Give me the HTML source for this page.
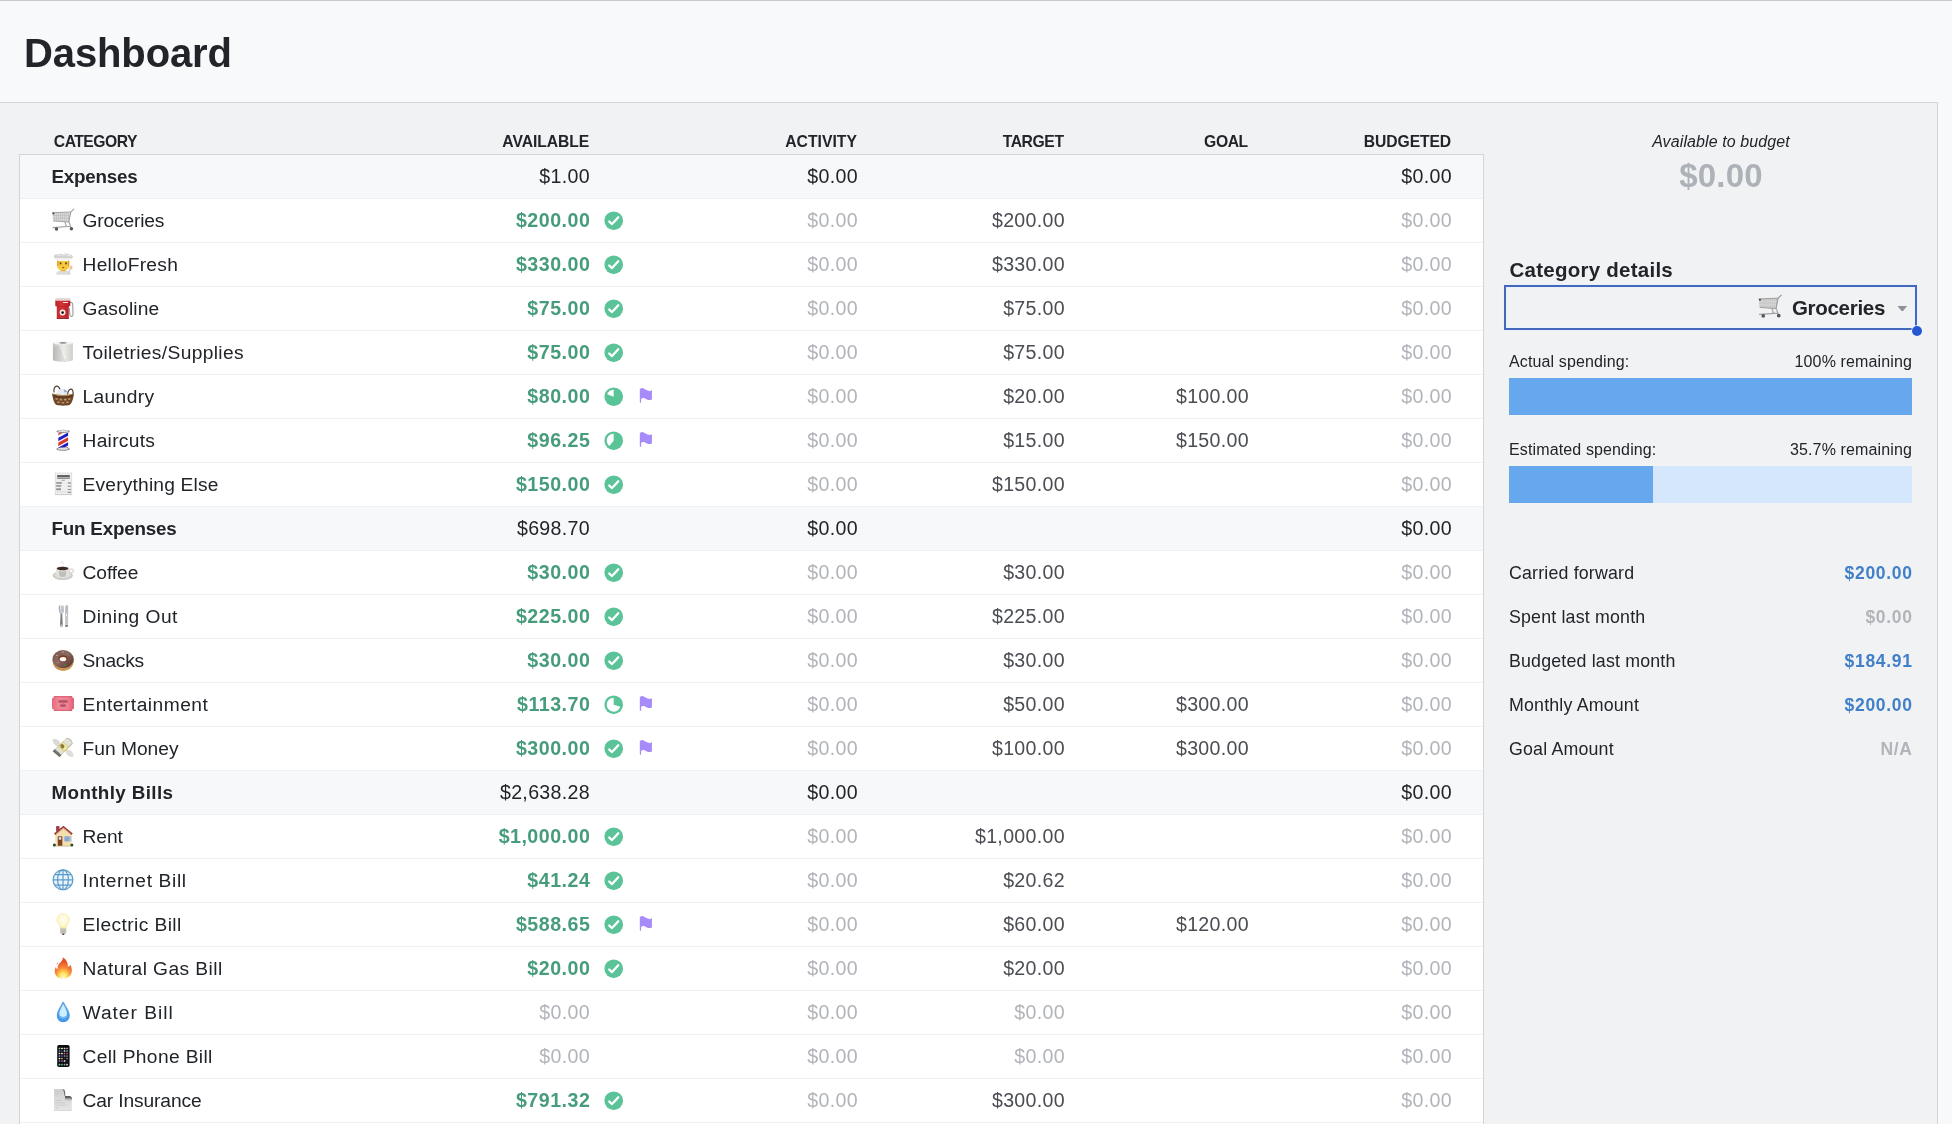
<!DOCTYPE html>
<html lang="en"><head><meta charset="utf-8"><title>Dashboard</title>
<style>
*{box-sizing:border-box}
html,body{margin:0;padding:0}
body{width:1952px;height:1124px;overflow:hidden;position:relative;background:#f8f9fb;font-family:"Liberation Sans",sans-serif;color:#212529;font-size:19px}
.topline{position:absolute;left:0;top:0;width:1952px;height:1px;background:#c6c8cc}
.hdr{position:absolute;left:0;top:1px;width:1952px;height:101px;background:#f8f9fb}
.ov h1{position:absolute;left:24px;top:23px;margin:0;font-size:40px;line-height:60px;font-weight:bold;color:#212529;letter-spacing:-.12px;white-space:nowrap}
.panel{position:absolute;left:-2px;top:102px;width:1940px;height:1030px;background:#f1f2f4;border:1px solid #d2d4d8}
.ch{position:absolute;top:131px;letter-spacing:-.3px;font-size:15.7px;line-height:22px;font-weight:bold;color:#212529;white-space:nowrap}
.ch.r{text-align:right}
.tbl{position:absolute;left:20px;top:51px;width:1465px;height:980px;border:1px solid #d3d5d9;background:#fff;overflow:hidden}
.rb{position:absolute;left:0;width:1463px;height:44px;border-bottom:1px solid #f0f1f2;background:#fff}
.rb.grp{background:#f7f8fa}
.ov{position:absolute;left:0;top:0;width:1952px;height:1124px;overflow:hidden;will-change:transform}
.rows{position:absolute;left:20px;top:155px;width:1463px;height:980px}
.row{position:absolute;left:0;width:1463px;height:44px;line-height:43px;white-space:nowrap}
.row span{position:absolute;top:0}
.nm{font-size:19.2px}
.nm.b{font-weight:bold;font-size:18.8px}
.n{text-align:right;font-size:19.6px;letter-spacing:.32px}
.c1{right:893px}
.c2{right:625px}
.c3{right:418px}
.c4{right:234px}
.c5{right:31px}
.gr{color:#479c7c;font-weight:bold;letter-spacing:.5px;margin-right:-.3px}
.z{color:#b1b4b9}
.t{color:#4a4d52}
.em{left:31px;top:9px !important;width:24px;height:24px;line-height:0}
.em svg{width:24px;height:24px;display:block}
.st{left:583.9px;top:11.7px !important;width:19.4px;height:19.4px;line-height:0}
.st svg{width:19.4px;height:19.4px;display:block}
.fl{left:619px;top:13px !important;width:14px;height:16px;line-height:0}
.fl svg{width:14px;height:16px;display:block}
.side{position:absolute;left:0;top:0;width:1952px;height:0}
.side>div{position:absolute;white-space:nowrap}
.atb{left:1521px;width:400px;text-align:center;top:131px;font-size:16px;line-height:22px;font-style:italic;letter-spacing:.1px}
.atbv{left:1521px;width:400px;text-align:center;top:154px;font-size:33px;line-height:44px;font-weight:bold;color:#adb1b8;letter-spacing:.2px}
.cdt{left:1509.5px;top:256px;font-size:20.5px;line-height:28px;font-weight:bold;letter-spacing:.25px}
.sel{left:1504px;top:285px;width:413px;height:45px;border:2px solid #4668ba;box-shadow:0 0 0 1px rgba(232,241,253,.85),inset 0 0 0 1px rgba(232,241,253,.85)}
.seltx{position:absolute;right:30px;top:7px;font-size:20.5px;line-height:28px;font-weight:bold;letter-spacing:-.3px}
.selic{position:absolute;right:132px;top:7px;width:26px;height:25px}
.selic svg{width:26px;height:25px;display:block}
.caret{position:absolute;right:7.2px;top:18.7px;width:10.6px;height:5.8px}
.dot{left:1912px;top:325.5px;width:10px;height:10px;border-radius:50%;background:#2556d4;box-shadow:0 0 0 1px rgba(240,246,255,.8)}
.lb{font-size:16px;line-height:22px;letter-spacing:.13px}
.lb.rr{right:40px;text-align:right}
.bar{left:1509px;width:403px;height:37px;background:#d4e7fc}
.bar div{height:37px;background:#66a7ed}
.dl{left:1509px;font-size:17.8px;line-height:44px;letter-spacing:.18px}
.dv{right:40px;text-align:right;font-size:17.5px;line-height:44px;font-weight:bold;letter-spacing:.7px;margin-right:-.7px}
.bl{color:#4180c8}
.gy{color:#b1b4b9}

</style></head>
<body>
<svg width="0" height="0" style="position:absolute"><defs>
<linearGradient id="gRoll" x1="0" x2="1" y1="0" y2="0"><stop offset="0" stop-color="#c2c2be"/><stop offset=".55" stop-color="#ecece9"/><stop offset="1" stop-color="#cfcfcb"/></linearGradient>
<radialGradient id="gFire" cx=".5" cy=".95" r=".75"><stop offset="0" stop-color="#fffbe0"/><stop offset=".3" stop-color="#ffe25a"/><stop offset=".62" stop-color="#f98a3a"/><stop offset="1" stop-color="#e85228"/></radialGradient>
<linearGradient id="gDrop" x1="0" x2="0" y1="0" y2="1"><stop offset="0" stop-color="#6aa6da"/><stop offset=".55" stop-color="#55a0e6"/><stop offset="1" stop-color="#3f96ea"/></linearGradient>
<radialGradient id="gBulb" cx=".5" cy=".4" r=".6"><stop offset="0" stop-color="#fffdf2"/><stop offset=".7" stop-color="#fdf6cf"/><stop offset="1" stop-color="#f6e89a"/></radialGradient>
<linearGradient id="gPage" x1="0" x2="0" y1="0" y2="1"><stop offset="0" stop-color="#cfcfcf"/><stop offset="1" stop-color="#e6e6e6"/></linearGradient>
<linearGradient id="gDonut" x1="0" x2="1" y1="0" y2="1"><stop offset="0" stop-color="#7a5648"/><stop offset=".45" stop-color="#8a6a62"/><stop offset="1" stop-color="#4e2c20"/></linearGradient>
<linearGradient id="gFuel" x1="0" x2="1" y1="0" y2="0"><stop offset="0" stop-color="#b92428"/><stop offset=".4" stop-color="#d4353a"/><stop offset="1" stop-color="#b01f24"/></linearGradient>
<linearGradient id="gTicket" x1="0" x2="1" y1="0" y2="0"><stop offset="0" stop-color="#e36a7c"/><stop offset=".3" stop-color="#f08796"/><stop offset=".7" stop-color="#ef8292"/><stop offset="1" stop-color="#de6074"/></linearGradient>
</defs></svg>
<div class="topline"></div>
<div class="hdr"></div>
<div class="panel">
<div class="tbl">
<div class="rb grp" style="top:0px"></div>
<div class="rb" style="top:44px"></div>
<div class="rb" style="top:88px"></div>
<div class="rb" style="top:132px"></div>
<div class="rb" style="top:176px"></div>
<div class="rb" style="top:220px"></div>
<div class="rb" style="top:264px"></div>
<div class="rb" style="top:308px"></div>
<div class="rb grp" style="top:352px"></div>
<div class="rb" style="top:396px"></div>
<div class="rb" style="top:440px"></div>
<div class="rb" style="top:484px"></div>
<div class="rb" style="top:528px"></div>
<div class="rb" style="top:572px"></div>
<div class="rb grp" style="top:616px"></div>
<div class="rb" style="top:660px"></div>
<div class="rb" style="top:704px"></div>
<div class="rb" style="top:748px"></div>
<div class="rb" style="top:792px"></div>
<div class="rb" style="top:836px"></div>
<div class="rb" style="top:880px"></div>
<div class="rb" style="top:924px"></div>
</div>
</div>
<div class="ov">
<h1>Dashboard</h1>
<div class="ch" style="left:53.8px;letter-spacing:-.5px">CATEGORY</div>
<div class="ch r" style="right:1363.0px;letter-spacing:-0.08px;margin-right:-0.08px">AVAILABLE</div>
<div class="ch r" style="right:1095.0px;letter-spacing:0.04px;margin-right:0.04px">ACTIVITY</div>
<div class="ch r" style="right:888.8px;letter-spacing:-0.40px;margin-right:-0.40px">TARGET</div>
<div class="ch r" style="right:704.6px;letter-spacing:-0.40px;margin-right:-0.40px">GOAL</div>
<div class="ch r" style="right:501.0px;letter-spacing:-0.10px;margin-right:-0.10px">BUDGETED</div>
<div class="rows">
<div class="row" style="top:0px"><span class="nm b" style="left:31.5px;letter-spacing:-0.20px">Expenses</span><span class="n c1">$1.00</span><span class="n c2">$0.00</span><span class="n c5">$0.00</span></div>
<div class="row" style="top:44px"><span class="em"><svg viewBox="0 0 24 24"><path d="M1.2 4.7L19.7 4 17.8 14 2.100 12.900z" fill="#e6e6e6"/><path d="M3.200 5v7.800M5.200 5v8M7.200 4.900v8.200M9.200 4.800v8.400M11.200 4.700v8.600M13.200 4.600v8.800M15.200 4.500v9M17.200 4.400v9" stroke="#9c9c9c" stroke-width=".55" fill="none"/><path d="M1.500 7.600l17.500-.5M1.800 10.300l17-.2" stroke="#b4b4b4" stroke-width=".5" fill="none"/><path d="M1.200 4.700L19.700 4M2.100 12.900L17.800 14" stroke="#9a9a9a" stroke-width=".9" fill="none"/><circle cx="2.400" cy="5.500" r="1" fill="#444"/><path d="M17.800 14L19.700 4.200 22.700 1.200" stroke="#9c9c9c" stroke-width="1.100" fill="none" stroke-linecap="round"/><path d="M14 14l1.300 4.300M18 14l1.700 4.700M1.900 19.600L19.700 18.300" stroke="#a2a2a2" stroke-width="1.100" fill="none" stroke-linecap="round"/><circle cx="5.500" cy="21" r="1.750" fill="#555"/><circle cx="20.400" cy="20.800" r="1.750" fill="#555"/></svg></span><span class="nm" style="left:62.5px;letter-spacing:-0.16px">Groceries</span><span class="n c1 gr">$200.00</span><span class="st"><svg viewBox="0 0 20 20"><circle cx="10" cy="10" r="9.6" fill="#5bc398"/><path d="M5.400 10.900L8.300 13.500 14.700 6.500" fill="none" stroke="#fff" stroke-width="2.35" stroke-linecap="round" stroke-linejoin="round"/></svg></span><span class="n c2 z">$0.00</span><span class="n c3 t">$200.00</span><span class="n c5 z">$0.00</span></div>
<div class="row" style="top:88px"><span class="em"><svg viewBox="0 0 24 24"><path d="M5.100 22.800c0-3 2.500-4.600 7-4.600s7.600 1.600 7.600 4.600z" fill="#dcdcdc"/><rect x="9.800" y="16.800" width="4.800" height="2.400" fill="#e2a62a"/><path d="M6.200 9h12v5.200c0 2.600-2.600 4.200-6 4.200s-6-1.600-6-4.200z" fill="#f7c93e"/><path d="M6.200 8.500h1.300v5.500h-1.300zM16.900 8.500h1.300v5.500h-1.300z" fill="#dc9c24"/><ellipse cx="9.600" cy="11.400" rx=".9" ry="1.100" fill="#5a3a10"/><ellipse cx="15" cy="11.400" rx=".9" ry="1.100" fill="#5a3a10"/><ellipse cx="12.200" cy="15.500" rx="1.200" ry=".7" fill="#9a5a14"/><path d="M3 5c-.4-2 1.600-3.300 3.600-2.700C7.600 1.600 10 1.300 12 2.300c1.800-1 4.400-.9 5.600.2 2.300-.5 4.500.700 4.300 2.500-.1 1.200-1.400 1.800-3 1.600H5.800C4.300 6.800 3.200 6.200 3 5z" fill="#d2d2d2"/><path d="M6 3.600c1-.8 2.400-.9 3.400-.3M11 3c1.100-.6 2.500-.5 3.500.1M16.500 3.600c.9-.5 2.200-.4 3 .3" stroke="#f4f4f4" stroke-width=".9" fill="none" stroke-linecap="round"/><rect x="5.500" y="6.200" width="13.400" height="2.400" rx=".6" fill="#f1f1f1"/><path d="M17 21.600l2.600-5" stroke="#cfcfcf" stroke-width="1.200" stroke-linecap="round"/><ellipse cx="20" cy="15.400" rx="1.500" ry="2" fill="#ecc29c"/></svg></span><span class="nm" style="left:62.5px;letter-spacing:0.29px">HelloFresh</span><span class="n c1 gr">$330.00</span><span class="st"><svg viewBox="0 0 20 20"><circle cx="10" cy="10" r="9.6" fill="#5bc398"/><path d="M5.400 10.900L8.300 13.500 14.700 6.500" fill="none" stroke="#fff" stroke-width="2.35" stroke-linecap="round" stroke-linejoin="round"/></svg></span><span class="n c2 z">$0.00</span><span class="n c3 t">$330.00</span><span class="n c5 z">$0.00</span></div>
<div class="row" style="top:132px"><span class="em"><svg viewBox="0 0 24 24"><path d="M19.300 6.200l1.400.5c.7.300 1 .8 1 1.600l.3 10.200c0 1.200-.6 1.900-1.600 1.900s-1.600-.7-1.600-1.900l-.5-6.300" stroke="#9a9a9a" stroke-width="1.100" fill="none" stroke-linecap="round"/><path d="M4.300 4.300h15v6h-1.500V22.800H5.800V10.300H4.300z" fill="url(#gFuel)"/><path d="M4.300 3c0-.7.500-1.100 1.100-1.100h12.800c.6 0 1.100.4 1.100 1.100v1.500H4.300z" fill="#dedede"/><rect x="4.300" y="3.600" width="15" height=".7" fill="#f0c0c0"/><rect x="12" y="6" width="5" height="1" fill="#f6e0e0"/><rect x="5.800" y="10" width="12" height=".6" fill="#a82024" opacity=".6"/><rect x="5.800" y="22" width="12" height=".8" fill="#8e1c20"/><circle cx="11.600" cy="16.500" r="2.900" fill="#fbeeee"/><circle cx="11.600" cy="16.600" r="1.350" fill="#111"/></svg></span><span class="nm" style="left:62.5px;letter-spacing:0.13px">Gasoline</span><span class="n c1 gr">$75.00</span><span class="st"><svg viewBox="0 0 20 20"><circle cx="10" cy="10" r="9.6" fill="#5bc398"/><path d="M5.400 10.900L8.300 13.500 14.700 6.500" fill="none" stroke="#fff" stroke-width="2.35" stroke-linecap="round" stroke-linejoin="round"/></svg></span><span class="n c2 z">$0.00</span><span class="n c3 t">$75.00</span><span class="n c5 z">$0.00</span></div>
<div class="row" style="top:176px"><span class="em"><svg viewBox="0 0 24 24"><path d="M1.900 3v17.200c3 1.200 6.500 1.500 10 1.500s7-.3 10-1.500V3z" fill="url(#gRoll)"/><ellipse cx="11.900" cy="3" rx="10" ry="1.600" fill="#f3f3f1"/><ellipse cx="12" cy="2.800" rx="3.700" ry=".9" fill="#8e8e8a"/><path d="M9 5.400c1.800 3.500 3.200 7.600 5.600 13l-1 .4C11.800 13.500 10.600 9 8.400 5.800z" fill="#fbfbfa"/><path d="M8.400 5.800c2.200 3.200 3.400 7.700 5.200 13l-.6 2.800c-3.800 0-8-.4-11.100-1.500V8c2-1.800 4.200-2.600 6.500-2.200z" fill="#000" opacity=".05"/><path d="M12.800 20.800h2.400v.5c0 .5-.5.800-1.200.8s-1.200-.3-1.200-.8z" fill="#d6d6d2"/></svg></span><span class="nm" style="left:62.5px;letter-spacing:0.36px">Toiletries/Supplies</span><span class="n c1 gr">$75.00</span><span class="st"><svg viewBox="0 0 20 20"><circle cx="10" cy="10" r="9.6" fill="#5bc398"/><path d="M5.400 10.900L8.300 13.500 14.700 6.500" fill="none" stroke="#fff" stroke-width="2.35" stroke-linecap="round" stroke-linejoin="round"/></svg></span><span class="n c2 z">$0.00</span><span class="n c3 t">$75.00</span><span class="n c5 z">$0.00</span></div>
<div class="row" style="top:220px"><span class="em"><svg viewBox="0 0 24 24"><path d="M3 8c-.5-3.200.6-5.700 2.500-5.900 1.700-.1 3 1.500 3.900 4.200" stroke="#4a3c32" stroke-width="1.100" fill="none" stroke-linecap="round"/><path d="M5.100 9.500C6 6.200 8.500 5 11 5.100c2.600.1 5.200.6 6 3.400l.4 3.800H5z" fill="#e9edf3"/><path d="M12.500 5.600c1.800.2 3.200.9 3.800 2.300l-2.800.6z" fill="#9dabc2"/><path d="M1.400 9.400c3 1.500 7 1.900 10.600 1.900s7.700-.4 10.700-1.900c0 5-1.800 9.500-3.800 11.400-2 .7-4.400.9-6.900.9s-5-.2-6.900-.9C3.100 18.900 1.400 14.400 1.400 9.400z" fill="#6e4828"/><path d="M1.400 9.200c3 1.300 7 1.700 10.600 1.700s7.700-.4 10.700-1.700l-.1 1.300c-3 1.400-7 1.800-10.600 1.800s-7.500-.4-10.500-1.800z" fill="#b08454"/><path d="M1.500 10.600c3 1.400 6.900 1.800 10.500 1.800s7.600-.4 10.600-1.800l-.2 1.500c-3 1.300-6.800 1.700-10.400 1.700s-7.300-.4-10.300-1.700z" fill="#4a2e16" opacity=".75"/><path d="M4.500 14.300h2.300v1.500H4.500zM8.600 14.800h2.600v1.600H8.600zM13 14.800h2.600v1.600H13zM17.200 14.200h2.200v1.500h-2.200zM6.200 17.600h2.500v1.500H6.200zM10.600 18h2.700v1.500h-2.700zM15.200 17.600h2.400v1.500h-2.400z" fill="#cfa571" opacity=".85"/><path d="M16.700 9.900c.4-2.800 1.600-4.600 3.200-4.800 1.500-.1 2.200 1.700 2.200 4.500" stroke="#4a3c32" stroke-width="1.100" fill="none" stroke-linecap="round"/></svg></span><span class="nm" style="left:62.5px;letter-spacing:0.37px">Laundry</span><span class="n c1 gr">$80.00</span><span class="st"><svg viewBox="0 0 20 20"><circle cx="10" cy="10" r="9.6" fill="#5bc398"/><path d="M10 10L3.27 7.58A7.15 7.15 0 0 1 10 2.85Z" fill="#fff"/></svg></span><span class="fl"><svg viewBox="0 0 14 16"><path d="M.82 .9C2 .2 3 0 4 .17c1.500.33 2.700 1.530 3.940 2.130 1.260.6 2.560.9 3.560.7.600-.2 1.100-.6 1.420-1.200v9.400c-.620.6-1.320.85-2.120.85-1 0-1.900-.15-2.860-.5-1.040-.45-1.940-1.250-2.840-1.450-1.100-.2-2.100.2-3 .74v3.360a.64.64 0 0 1-1.280 0z" fill="#a78bfa"/></svg></span><span class="n c2 z">$0.00</span><span class="n c3 t">$20.00</span><span class="n c4 t">$100.00</span><span class="n c5 z">$0.00</span></div>
<div class="row" style="top:264px"><span class="em"><svg viewBox="0 0 24 24"><clipPath id="cpB"><rect x="7.300" y="4" width="9.800" height="16"/></clipPath><rect x="7.300" y="4" width="9.800" height="16" fill="#fbf6f8"/><g clip-path="url(#cpB)"><path d="M6 10.600L18 4v3.300L6 13.900z" fill="#1c1cc4"/><path d="M6 15.300L18 8.700v3.500L6 18.800z" fill="#d83a2a"/><path d="M6 20.300L18 13.700v3.400L6 23.700z" fill="#1c1cc4"/><path d="M6 6L14 1.600v2L6 8z" fill="#c05a4e"/><path d="M10 24l8-4.400v-1.300L10 22.800z" fill="#c05a4e"/></g><ellipse cx="12.100" cy="3.400" rx="6.800" ry="1.600" fill="#8e8e8e"/><ellipse cx="12.100" cy="3.100" rx="5.300" ry=".9" fill="#ebebeb"/><ellipse cx="12.100" cy="21" rx="6.800" ry="1.850" fill="#8e8e8e"/><ellipse cx="12.100" cy="20.700" rx="5.300" ry="1" fill="#e2e2e2"/></svg></span><span class="nm" style="left:62.5px;letter-spacing:0.29px">Haircuts</span><span class="n c1 gr">$96.25</span><span class="st"><svg viewBox="0 0 20 20"><circle cx="10" cy="10" r="9.6" fill="#5bc398"/><path d="M10 10L5.44 15.51A7.15 7.15 0 0 1 10 2.85Z" fill="#fff"/></svg></span><span class="fl"><svg viewBox="0 0 14 16"><path d="M.82 .9C2 .2 3 0 4 .17c1.500.33 2.700 1.530 3.940 2.130 1.260.6 2.560.9 3.560.7.600-.2 1.100-.6 1.420-1.200v9.400c-.620.6-1.320.85-2.120.85-1 0-1.900-.15-2.860-.5-1.040-.45-1.940-1.250-2.840-1.450-1.100-.2-2.100.2-3 .74v3.360a.64.64 0 0 1-1.280 0z" fill="#a78bfa"/></svg></span><span class="n c2 z">$0.00</span><span class="n c3 t">$15.00</span><span class="n c4 t">$150.00</span><span class="n c5 z">$0.00</span></div>
<div class="row" style="top:308px"><span class="em"><svg viewBox="0 0 24 24"><rect x="4.200" y="1" width="16.600" height="21.800" fill="#efefef" stroke="#d2d2d2" stroke-width=".6"/><rect x="6.200" y="3.100" width="12.600" height="2.300" fill="#5a5a5a"/><rect x="6" y="6" width="13" height=".8" fill="#7a7a7a"/><rect x="10.500" y="7.800" width="3.400" height=".9" fill="#9a9a9a"/><rect x="5.200" y="10.200" width="5.600" height="1.500" fill="#8a8a8a"/><rect x="16.800" y="10.300" width="3.200" height="1.400" fill="#9a9a9a"/><rect x="5.200" y="13.200" width="5" height="1.500" fill="#8a8a8a"/><rect x="16.800" y="13.700" width="3.200" height="1.200" fill="#9a9a9a"/><rect x="5.200" y="16.400" width="4.800" height="1.700" fill="#8a8a8a"/><rect x="16.800" y="16.900" width="3.200" height="1.200" fill="#9a9a9a"/><rect x="5.200" y="19.600" width="9.500" height=".5" fill="#c8c8c8"/><rect x="16.600" y="19.800" width="3.400" height="1.100" fill="#8a8a8a"/><rect x="4.200" y="22" width="16.600" height=".8" fill="#c9c9c9"/></svg></span><span class="nm" style="left:62.5px;letter-spacing:0.19px">Everything Else</span><span class="n c1 gr">$150.00</span><span class="st"><svg viewBox="0 0 20 20"><circle cx="10" cy="10" r="9.6" fill="#5bc398"/><path d="M5.400 10.900L8.300 13.500 14.700 6.500" fill="none" stroke="#fff" stroke-width="2.35" stroke-linecap="round" stroke-linejoin="round"/></svg></span><span class="n c2 z">$0.00</span><span class="n c3 t">$150.00</span><span class="n c5 z">$0.00</span></div>
<div class="row" style="top:352px"><span class="nm b" style="left:31.5px;letter-spacing:-0.20px">Fun Expenses</span><span class="n c1">$698.70</span><span class="n c2">$0.00</span><span class="n c5">$0.00</span></div>
<div class="row" style="top:396px"><span class="em"><svg viewBox="0 0 24 24"><path d="M9.800 2.800c.2-1 1.400-1.200 1.900-.4.400.7 0 1.200.9 1.700" stroke="#d0d0d0" stroke-width=".9" fill="none" stroke-linecap="round"/><ellipse cx="11.800" cy="15.500" rx="10.100" ry="4.500" fill="#c9c8c4"/><ellipse cx="11.800" cy="15" rx="8.600" ry="3.500" fill="#dddcd8"/><circle cx="20.300" cy="10.800" r="2" fill="none" stroke="#dcdad6" stroke-width="1.300"/><path d="M4.900 8.400c0 4.200.9 7.200 2.900 8.400 2.200 1 5.400 1 7.500 0 2-1.200 2.900-4.200 2.900-8.400z" fill="#e6e4e0"/><path d="M7.500 11c1.300.6 6.500.7 8 0l-.7 5.200c-1.700.9-4.700.9-6.400 0z" fill="#a9a7a3" opacity=".6"/><ellipse cx="11.600" cy="8.400" rx="6.700" ry="2.300" fill="#efe9e6"/><ellipse cx="11.600" cy="8.500" rx="5.800" ry="1.800" fill="#3b2a24"/></svg></span><span class="nm" style="left:62.5px;letter-spacing:-0.06px">Coffee</span><span class="n c1 gr">$30.00</span><span class="st"><svg viewBox="0 0 20 20"><circle cx="10" cy="10" r="9.6" fill="#5bc398"/><path d="M5.400 10.900L8.300 13.500 14.700 6.500" fill="none" stroke="#fff" stroke-width="2.35" stroke-linecap="round" stroke-linejoin="round"/></svg></span><span class="n c2 z">$0.00</span><span class="n c3 t">$30.00</span><span class="n c5 z">$0.00</span></div>
<div class="row" style="top:440px"><span class="em"><svg viewBox="0 0 24 24"><path d="M8.100 1.400h.9v4.500h.7V1.400h.9v4.500h.700V1.400h.9v4.500h.4V1.400h.100c.5 2.300.5 5.300-.3 7.200-.400.800-1.100 1.100-2 1.100s-1.700-.3-2.100-1.100c-.700-2-.700-4.900-.2-7.200z" fill="#a3a8b2"/><path d="M8.300 6.300h4.200c0 1.600-.3 2.400-.8 3-.4.300-1.600.3-2.300 0-.700-.600-1.100-1.400-1.100-3z" fill="#c9cdd8"/><path d="M9.600 9.400h1.600l.6 12.200c0 .8-.5 1.200-1.400 1.200s-1.400-.4-1.400-1.200z" fill="#7d7d80"/><rect x="9.600" y="20.600" width="1.700" height="1.300" fill="#d8d8dc"/><path d="M14.200 12V3.500c0-1.500.7-2.500 1.700-2.500.9 0 1.200 1 1.200 2.500V12z" fill="#b9bbc0"/><path d="M14.100 12h3v9.600c0 .8-.6 1.300-1.500 1.300s-1.500-.5-1.500-1.300z" fill="#c5c6ca"/><rect x="14.100" y="21" width="3" height="1.900" rx=".8" fill="#85868a"/><rect x="15" y="9.800" width="1" height="2.300" fill="#f4f4f6"/></svg></span><span class="nm" style="left:62.5px;letter-spacing:0.47px">Dining Out</span><span class="n c1 gr">$225.00</span><span class="st"><svg viewBox="0 0 20 20"><circle cx="10" cy="10" r="9.6" fill="#5bc398"/><path d="M5.400 10.900L8.300 13.500 14.700 6.500" fill="none" stroke="#fff" stroke-width="2.35" stroke-linecap="round" stroke-linejoin="round"/></svg></span><span class="n c2 z">$0.00</span><span class="n c3 t">$225.00</span><span class="n c5 z">$0.00</span></div>
<div class="row" style="top:484px"><span class="em"><svg viewBox="0 0 24 24"><ellipse cx="12.100" cy="13.300" rx="10.600" ry="9.400" fill="#d3a462"/><ellipse cx="12.100" cy="11.300" rx="10.700" ry="9.400" fill="url(#gDonut)"/><path d="M2 14c2 4.500 6 6 10 6s8.200-1.600 10.400-6c-.8 5.500-5 8.700-10.300 8.700S2.600 19.500 2 14z" fill="#c99554"/><ellipse cx="12" cy="10.600" rx="4.700" ry="3.400" fill="#7a3c22"/><ellipse cx="12" cy="11.200" rx="3.300" ry="2.100" fill="#fdfbf7"/><circle cx="14" cy="17.200" r=".9" fill="#5a7a3a"/><circle cx="6" cy="7.500" r=".6" fill="#e8e0d8"/><circle cx="17.500" cy="6" r=".6" fill="#7a8a5a"/><circle cx="12" cy="4" r=".7" fill="#d8c8b8"/><circle cx="7" cy="14.500" r=".7" fill="#b89ab0"/></svg></span><span class="nm" style="left:62.5px;letter-spacing:-0.26px">Snacks</span><span class="n c1 gr">$30.00</span><span class="st"><svg viewBox="0 0 20 20"><circle cx="10" cy="10" r="9.6" fill="#5bc398"/><path d="M5.400 10.900L8.300 13.500 14.700 6.500" fill="none" stroke="#fff" stroke-width="2.35" stroke-linecap="round" stroke-linejoin="round"/></svg></span><span class="n c2 z">$0.00</span><span class="n c3 t">$30.00</span><span class="n c5 z">$0.00</span></div>
<div class="row" style="top:528px"><span class="em"><svg viewBox="0 0 24 24"><path d="M3 4h18l.4 1.600 1.600.6v10.500l-1.600.6-.4 1.600H3l-.4-1.600L1 16.700V6.200l1.600-.6z" fill="url(#gTicket)"/><path d="M3 4h18l.3 1.200H2.700zM3 18.900h18l.3-1.200H2.700z" fill="#d65a70" opacity=".7"/><rect x="7.600" y="8.300" width="9" height="2.300" fill="#b04e62"/><rect x="9.200" y="12.400" width="5.500" height="2.300" fill="#b04e62"/><rect x="10.800" y="11.200" width="2.300" height=".5" fill="#c05a70"/></svg></span><span class="nm" style="left:62.5px;letter-spacing:0.49px">Entertainment</span><span class="n c1 gr">$113.70</span><span class="st"><svg viewBox="0 0 20 20"><circle cx="10" cy="10" r="9.6" fill="#5bc398"/><path d="M10 10L16.80 12.21A7.15 7.15 0 1 1 10 2.85Z" fill="#fff"/></svg></span><span class="fl"><svg viewBox="0 0 14 16"><path d="M.82 .9C2 .2 3 0 4 .17c1.500.33 2.700 1.530 3.940 2.130 1.260.6 2.560.9 3.560.7.600-.2 1.100-.6 1.420-1.200v9.400c-.620.6-1.320.85-2.120.85-1 0-1.900-.15-2.860-.5-1.040-.45-1.940-1.250-2.840-1.450-1.100-.2-2.100.2-3 .74v3.360a.64.64 0 0 1-1.280 0z" fill="#a78bfa"/></svg></span><span class="n c2 z">$0.00</span><span class="n c3 t">$50.00</span><span class="n c4 t">$300.00</span><span class="n c5 z">$0.00</span></div>
<div class="row" style="top:572px"><span class="em"><svg viewBox="0 0 24 24"><path d="M1.600 3.300c2-.6 4.800-.2 6.400 1.700 1.200 1.500 1.800 3.300 1.500 5-1.700.7-4 .300-5.600-1.300C2.400 7.200 1.700 5.200 1.600 3.300z" fill="#d9d9d5"/><path d="M22.600 20.400c-2 .7-4.600.3-6.300-1.500-1.300-1.400-1.900-3.300-1.600-5 1.700-.800 4-.400 5.600 1.200 1.500 1.500 2.200 3.400 2.300 5.300z" fill="#deded9"/><path d="M1.700 15.200L15.400 1.900c2.500-.5 5.300 1.600 6.500 5.800L8.500 21z" fill="#b9bcb0"/><path d="M1.700 15.200l2-1.900 6.900 5.700L8.500 21z" fill="#6f716c"/><path d="M14.500 2.800c2.400-.6 5 1 6.300 4.400l-3.400 3.300c-2.200-1.400-4.200-3.300-5.300-5.400z" fill="#e4e2da"/><path d="M4.500 13.200l2.900-2.800c2 1.700 4 3.500 5.700 5.500l-2.900 2.900c-1.700-2-3.700-3.900-5.700-5.600z" fill="#e2e0d8"/><path d="M7.200 10.600l5-4.900c1.700 2.200 3.600 4 5.800 5.500l-5 4.900c-1.800-2.100-3.700-3.900-5.800-5.500z" fill="#e6d768"/><path d="M8.900 10.300l3.400-3.200c1.200 1.400 2.500 2.700 4 3.800l-3.400 3.300c-1.200-1.500-2.500-2.800-4-3.900z" fill="#f1ecc4"/><ellipse cx="11.400" cy="10.300" rx="1.900" ry="2.300" transform="rotate(-40 11.400 10.300)" fill="#8c7a3c"/></svg></span><span class="nm" style="left:62.5px;letter-spacing:-0.00px">Fun Money</span><span class="n c1 gr">$300.00</span><span class="st"><svg viewBox="0 0 20 20"><circle cx="10" cy="10" r="9.6" fill="#5bc398"/><path d="M5.400 10.900L8.300 13.500 14.700 6.500" fill="none" stroke="#fff" stroke-width="2.35" stroke-linecap="round" stroke-linejoin="round"/></svg></span><span class="fl"><svg viewBox="0 0 14 16"><path d="M.82 .9C2 .2 3 0 4 .17c1.500.33 2.700 1.530 3.940 2.130 1.260.6 2.560.9 3.560.7.600-.2 1.100-.6 1.420-1.200v9.400c-.620.6-1.320.85-2.120.85-1 0-1.900-.15-2.860-.5-1.040-.45-1.940-1.250-2.840-1.450-1.100-.2-2.100.2-3 .74v3.360a.64.64 0 0 1-1.280 0z" fill="#a78bfa"/></svg></span><span class="n c2 z">$0.00</span><span class="n c3 t">$100.00</span><span class="n c4 t">$300.00</span><span class="n c5 z">$0.00</span></div>
<div class="row" style="top:616px"><span class="nm b" style="left:31.5px;letter-spacing:0.38px">Monthly Bills</span><span class="n c1">$2,638.28</span><span class="n c2">$0.00</span><span class="n c5">$0.00</span></div>
<div class="row" style="top:660px"><span class="em"><svg viewBox="0 0 24 24"><rect x="5.100" y="2.100" width="3.400" height="5.500" fill="#a43a4a"/><path d="M4.300 10L12.400 3.600 20.400 10v12.300H4.300z" fill="#f1dfae"/><path d="M4.300 21.600h16.100v.8H4.300z" fill="#cdb9a0"/><path d="M12.400 1.700l9.400 7.700-1.500 1.700-7.900-6.500-7.900 6.500L3 9.400z" fill="#9a3832"/><path d="M12.400 4.600l7.100 5.800.5-.5-7.600-6.300-7.600 6.300.5.500z" fill="#f3d9b0" opacity=".8"/><rect x="6.800" y="12.400" width="4.500" height="9.300" fill="#7b3a20"/><circle cx="9" cy="14.500" r="1.450" fill="#d4dfee"/><rect x="7.400" y="17.200" width="3.300" height=".5" fill="#9a5a38"/><rect x="7.400" y="19.300" width="3.300" height=".5" fill="#9a5a38"/><rect x="13.300" y="12.200" width="7.100" height="5.300" fill="#b7bcc6"/><rect x="13.600" y="12.500" width="4.600" height="4.700" rx="1.200" fill="#86a8d8"/><circle cx="3.400" cy="20.900" r="1.500" fill="#2c4a1a"/><circle cx="20.900" cy="20.900" r="1.500" fill="#2c4a1a"/></svg></span><span class="nm" style="left:62.5px;letter-spacing:-0.07px">Rent</span><span class="n c1 gr">$1,000.00</span><span class="st"><svg viewBox="0 0 20 20"><circle cx="10" cy="10" r="9.6" fill="#5bc398"/><path d="M5.400 10.900L8.300 13.500 14.700 6.500" fill="none" stroke="#fff" stroke-width="2.35" stroke-linecap="round" stroke-linejoin="round"/></svg></span><span class="n c2 z">$0.00</span><span class="n c3 t">$1,000.00</span><span class="n c5 z">$0.00</span></div>
<div class="row" style="top:704px"><span class="em"><svg viewBox="0 0 24 24"><circle cx="12" cy="11.800" r="9.900" fill="#e6f4fc" stroke="#5d9bc8" stroke-width="1.200"/><path d="M12 1.900v19.800M2.100 11.800h19.800M3.800 6.600h16.400M3.800 17.200h16.400" stroke="#5d9bc8" stroke-width="1.200" fill="none"/><ellipse cx="12" cy="11.800" rx="5.400" ry="9.900" fill="none" stroke="#5d9bc8" stroke-width="1.200"/></svg></span><span class="nm" style="left:62.5px;letter-spacing:0.63px">Internet Bill</span><span class="n c1 gr">$41.24</span><span class="st"><svg viewBox="0 0 20 20"><circle cx="10" cy="10" r="9.6" fill="#5bc398"/><path d="M5.400 10.900L8.300 13.500 14.700 6.500" fill="none" stroke="#fff" stroke-width="2.35" stroke-linecap="round" stroke-linejoin="round"/></svg></span><span class="n c2 z">$0.00</span><span class="n c3 t">$20.62</span><span class="n c5 z">$0.00</span></div>
<div class="row" style="top:748px"><span class="em"><svg viewBox="0 0 24 24"><path d="M12.200 1.500c3.600 0 6.300 2.800 6.300 6.200 0 2.400-1.200 3.700-2.200 5.200-.8 1.200-1 2.300-1.100 3.500H9.200c-.1-1.200-.3-2.300-1.100-3.500-1-1.500-2.200-2.800-2.200-5.200 0-3.400 2.700-6.200 6.300-6.200z" fill="url(#gBulb)" stroke="#f3e5a0" stroke-width=".5"/><path d="M9.200 16.400h6v4c0 .7-.4 1.100-1 1.100h-4c-.6 0-1-.4-1-1.100z" fill="#b3afa7"/><path d="M9.200 17.600h6M9.200 19h6M9.200 20.400h6" stroke="#e2dfd8" stroke-width=".5"/><path d="M10.900 21.500h2.800l-.5 1.200c-.2.300-.4.400-.9.400s-.7-.1-.9-.4z" fill="#4a4846"/></svg></span><span class="nm" style="left:62.5px;letter-spacing:0.41px">Electric Bill</span><span class="n c1 gr">$588.65</span><span class="st"><svg viewBox="0 0 20 20"><circle cx="10" cy="10" r="9.6" fill="#5bc398"/><path d="M5.400 10.900L8.300 13.500 14.700 6.500" fill="none" stroke="#fff" stroke-width="2.35" stroke-linecap="round" stroke-linejoin="round"/></svg></span><span class="fl"><svg viewBox="0 0 14 16"><path d="M.82 .9C2 .2 3 0 4 .17c1.500.33 2.700 1.530 3.940 2.130 1.260.6 2.560.9 3.560.7.600-.2 1.100-.6 1.420-1.200v9.400c-.620.6-1.320.85-2.120.85-1 0-1.900-.15-2.860-.5-1.040-.45-1.940-1.250-2.840-1.450-1.100-.2-2.100.2-3 .74v3.360a.64.64 0 0 1-1.280 0z" fill="#a78bfa"/></svg></span><span class="n c2 z">$0.00</span><span class="n c3 t">$60.00</span><span class="n c4 t">$120.00</span><span class="n c5 z">$0.00</span></div>
<div class="row" style="top:792px"><span class="em"><svg viewBox="0 0 24 24"><path d="M5.600 8.200c.2-.8.700-1.400 1.400-1.700-.2 1-.6 1.500-1.300 2.300z" fill="#8a5a8a"/><path d="M11.800 1.200c1.800 1.200 4.400 3.700 4.800 6.300.2 1.300-.1 2.300.6 3.300 1-.2 1.800-1 2.200-2 1 2 1.600 4.200 1.400 6.500-.4 4.300-3.600 7.400-8.500 7.400-4.800 0-8.100-2.600-8.500-6.800-.2-2 .3-3.700 1.100-5 .3 1 .8 1.900 1.700 2.400C6.300 9.600 8 7.600 9.800 6c1.300-1.200 2.200-2.800 2-4.800z" fill="url(#gFire)"/></svg></span><span class="nm" style="left:62.5px;letter-spacing:0.43px">Natural Gas Bill</span><span class="n c1 gr">$20.00</span><span class="st"><svg viewBox="0 0 20 20"><circle cx="10" cy="10" r="9.6" fill="#5bc398"/><path d="M5.400 10.900L8.300 13.500 14.700 6.500" fill="none" stroke="#fff" stroke-width="2.35" stroke-linecap="round" stroke-linejoin="round"/></svg></span><span class="n c2 z">$0.00</span><span class="n c3 t">$20.00</span><span class="n c5 z">$0.00</span></div>
<div class="row" style="top:836px"><span class="em"><svg viewBox="0 0 24 24"><path d="M12.200 1.800c.5 0 .8.300 1.100.9 1.600 3.700 5.500 8.200 5.500 12.600 0 3.900-2.800 6.900-6.600 6.900S5.800 19.200 5.800 15.300c0-4.400 3.700-8.900 5.300-12.600.3-.6.600-.9 1.100-.9z" fill="url(#gDrop)"/><path d="M12.200 4.500c.3 0 .4.200.6.600 1 2.500 3.300 6 3.300 8.600 0 2.300-1.500 3.300-3.900 3.300s-3.900-1-3.900-3.300c0-2.600 2.300-6.100 3.300-8.600.2-.4.300-.6.600-.6z" fill="#c9eefc"/><path d="M8.300 14.500c.6 1.700 2 2.500 3.900 2.500s3.300-.8 3.900-2.500c.3 2.600-1.300 4.300-3.900 4.300s-4.200-1.700-3.900-4.300z" fill="#7cc2f4" opacity=".8"/></svg></span><span class="nm" style="left:62.5px;letter-spacing:0.98px">Water Bill</span><span class="n c1 z">$0.00</span><span class="n c2 z">$0.00</span><span class="n c3 z">$0.00</span><span class="n c5 z">$0.00</span></div>
<div class="row" style="top:880px"><span class="em"><svg viewBox="0 0 24 24"><rect x="6.200" y="1" width="12.400" height="22" rx="1.800" fill="#0c0c10"/><rect x="7.6" y="3.7" width="1.700" height="1.500" rx=".4" fill="#8fd07c"/><rect x="10.1" y="3.7" width="1.700" height="1.500" rx=".4" fill="#f2f2f2"/><rect x="12.7" y="3.7" width="1.700" height="1.500" rx=".4" fill="#d8d8e8"/><rect x="15.2" y="3.7" width="1.700" height="1.500" rx=".4" fill="#c8a0b0"/><rect x="7.6" y="6.3" width="1.700" height="1.500" rx=".4" fill="#6a86c8"/><rect x="10.1" y="6.3" width="1.700" height="1.500" rx=".4" fill="#3c3c58"/><rect x="12.7" y="6.3" width="1.700" height="1.500" rx=".4" fill="#e0e0e0"/><rect x="15.2" y="6.3" width="1.700" height="1.500" rx=".4" fill="#7ab0d0"/><rect x="7.6" y="8.8" width="1.700" height="1.500" rx=".4" fill="#e8e8c8"/><rect x="10.1" y="8.8" width="1.700" height="1.500" rx=".4" fill="#f0f0f0"/><rect x="12.7" y="8.8" width="1.700" height="1.500" rx=".4" fill="#c86a80"/><rect x="15.2" y="8.8" width="1.700" height="1.500" rx=".4" fill="#8a6a7a"/><rect x="7.6" y="11.3" width="1.700" height="1.500" rx=".4" fill="#7a96c8"/><rect x="10.1" y="11.3" width="1.700" height="1.500" rx=".4" fill="#6a4a9a"/><rect x="12.7" y="11.3" width="1.700" height="1.500" rx=".4" fill="#7aa0c8"/><rect x="15.2" y="11.3" width="1.700" height="1.500" rx=".4" fill="#c07080"/><rect x="7.6" y="13.8" width="1.700" height="1.500" rx=".4" fill="#f4f4f4"/><rect x="10.1" y="13.8" width="1.700" height="1.500" rx=".4" fill="#c8a060"/><rect x="12.7" y="13.8" width="1.700" height="1.500" rx=".4" fill="#303040"/><rect x="15.2" y="13.8" width="1.700" height="1.500" rx=".4" fill="#7a8a80"/><rect x="7.6" y="16.3" width="1.700" height="1.500" rx=".4" fill="#6a8ad0"/><rect x="10.1" y="16.3" width="1.700" height="1.500" rx=".4" fill="#b06070"/><rect x="12.7" y="16.3" width="1.700" height="1.500" rx=".4" fill="#f6f6f6"/><rect x="15.2" y="16.3" width="1.700" height="1.500" rx=".4" fill="#202028"/><rect x="7.600" y="19.800" width="1.700" height="1.700" rx=".4" fill="#7ad08a"/><rect x="10.100" y="19.800" width="1.700" height="1.700" rx=".4" fill="#58b090"/><rect x="12.700" y="19.800" width="1.700" height="1.700" rx=".4" fill="#68c080"/><rect x="15.200" y="19.800" width="1.700" height="1.700" rx=".4" fill="#f0c0e0"/></svg></span><span class="nm" style="left:62.5px;letter-spacing:0.36px">Cell Phone Bill</span><span class="n c1 z">$0.00</span><span class="n c2 z">$0.00</span><span class="n c3 z">$0.00</span><span class="n c5 z">$0.00</span></div>
<div class="row" style="top:924px"><span class="em"><svg viewBox="0 0 24 24"><path d="M3 1h9.300c1.200.2 1.800 1 1.800 2.300v5h4.600c1.300 0 2.100.8 2.100 2.200V22.800H3z" fill="url(#gPage)"/><path d="M11.300 1.200c1.900.2 2.900 1.300 2.900 3.100v3.800l-.9-.3c0-2.800-.4-5.400-2-6.600z" fill="#6e6e6e"/><path d="M14 8.100h4.500c1.400 0 2.300.9 2.300 2.400v1c-.6-.7-1.500-.9-2.700-.9h-4.100z" fill="#5e5e5e"/><path d="M14 10.500h4.200c1.200 0 2.100.3 2.600 1v.8H14z" fill="#a8a8a8" opacity=".7"/><path d="M4.200 3.600h6.200M4.200 6h6.800M4.200 12.500h6.500M4.200 14.800h10M4.200 17.200h11M4.800 20h3" stroke="#c2c2c2" stroke-width=".6"/><rect x="3" y="22" width="17.800" height=".8" fill="#d2d2d2"/></svg></span><span class="nm" style="left:62.5px;letter-spacing:-0.12px">Car Insurance</span><span class="n c1 gr">$791.32</span><span class="st"><svg viewBox="0 0 20 20"><circle cx="10" cy="10" r="9.6" fill="#5bc398"/><path d="M5.400 10.900L8.300 13.500 14.700 6.500" fill="none" stroke="#fff" stroke-width="2.35" stroke-linecap="round" stroke-linejoin="round"/></svg></span><span class="n c2 z">$0.00</span><span class="n c3 t">$300.00</span><span class="n c5 z">$0.00</span></div>
</div>
<div class="side">
<div class="atb">Available to budget</div>
<div class="atbv">$0.00</div>
<div class="cdt">Category details</div>
<div class="sel"><span class="selic"><svg viewBox="0 0 24 24"><path d="M1.2 4.7L19.7 4 17.8 14 2.100 12.900z" fill="#c4c4c4"/><path d="M3.200 5v7.800M5.200 5v8M7.200 4.900v8.200M9.200 4.800v8.400M11.200 4.700v8.600M13.200 4.600v8.800M15.200 4.500v9M17.200 4.400v9" stroke="#e2e2e2" stroke-width=".5" fill="none"/><path d="M1.500 7.600l17.500-.5M1.800 10.300l17-.2" stroke="#dcdcdc" stroke-width=".5" fill="none"/><path d="M1.200 4.700L19.700 4M2.100 12.900L17.800 14" stroke="#9a9a9a" stroke-width=".9" fill="none"/><circle cx="2.400" cy="5.500" r="1" fill="#444"/><path d="M17.800 14L19.700 4.200 22.700 1.200" stroke="#9c9c9c" stroke-width="1.100" fill="none" stroke-linecap="round"/><path d="M14 14l1.300 4.300M18 14l1.700 4.700M1.900 19.600L19.700 18.300" stroke="#a2a2a2" stroke-width="1.100" fill="none" stroke-linecap="round"/><circle cx="5.500" cy="21" r="1.750" fill="#555"/><circle cx="20.400" cy="20.800" r="1.750" fill="#555"/></svg></span><span class="seltx">Groceries</span><svg class="caret" viewBox="0 0 10 6"><path d="M0 0h10L5 6z" fill="#8d9299"/></svg></div>
<div class="dot"></div>
<div class="lb" style="top:351px;left:1509px">Actual spending:</div>
<div class="lb rr" style="top:351px">100% remaining</div>
<div class="bar" style="top:378px"><div style="width:100%"></div></div>
<div class="lb" style="top:439px;left:1509px">Estimated spending:</div>
<div class="lb rr" style="top:439px">35.7% remaining</div>
<div class="bar" style="top:466px"><div style="width:35.7%"></div></div>
<div class="dl" style="top:551px">Carried forward</div><div class="dv bl" style="top:551px">$200.00</div>
<div class="dl" style="top:595px">Spent last month</div><div class="dv gy" style="top:595px">$0.00</div>
<div class="dl" style="top:639px">Budgeted last month</div><div class="dv bl" style="top:639px">$184.91</div>
<div class="dl" style="top:683px">Monthly Amount</div><div class="dv bl" style="top:683px">$200.00</div>
<div class="dl" style="top:727px">Goal Amount</div><div class="dv gy" style="top:727px">N/A</div>
</div>
</div>
</body></html>
